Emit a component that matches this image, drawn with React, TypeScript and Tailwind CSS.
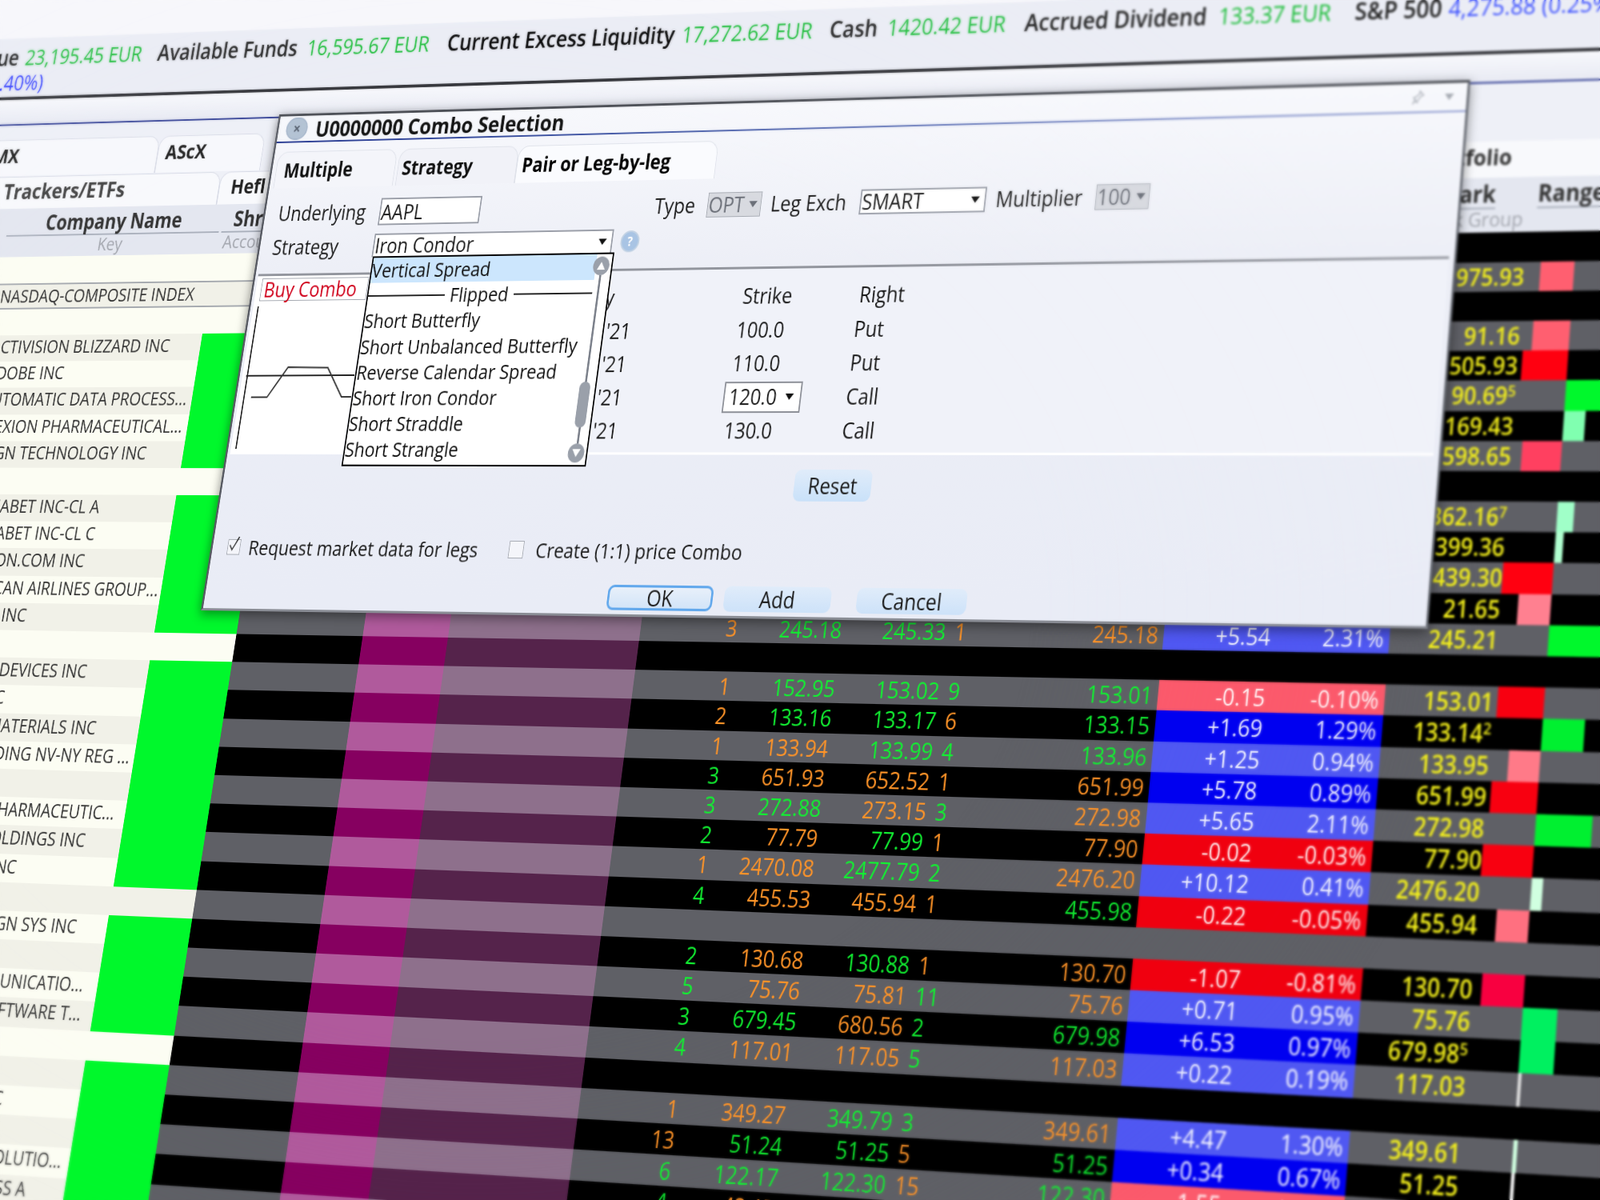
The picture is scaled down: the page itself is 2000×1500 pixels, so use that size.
const G = 'text-[#12f032]';
const O = 'text-[#ff9428]';

interface Row {
  name?: string;
  green?: boolean;
  bidSize?: [string, string];
  bid?: [string, string];
  ask?: [string, string];
  askSize?: [string, string];
  last?: [string, string];
  change?: string;
  pct?: string;
  mark?: string;
  sup?: string;
  bar?: number;
  barColor?: string;
}

const rows: Row[] = [
  {},
  { name: 'NASDAQ-COMPOSITE INDEX', mark: '975.93', bar: -43, barColor: '#ff5f70' },
  {},
  { name: 'ACTIVISION BLIZZARD INC', green: true, mark: '91.16', bar: -47, barColor: '#ff5f70' },
  { name: 'ADOBE INC', green: true, mark: '505.93', bar: -58, barColor: '#ff0010' },
  { name: 'AUTOMATIC DATA PROCESS...', green: true, mark: '90.69', sup: '5', bar: 52, barColor: '#00f82c' },
  { name: 'ALEXION PHARMACEUTICAL...', green: true, mark: '169.43', bar: 27, barColor: '#80ffb0' },
  { name: 'ALIGN TECHNOLOGY INC', green: true, mark: '598.65', bar: -50, barColor: '#ff4060' },
  {},
  { name: 'ALPHABET INC-CL A', green: true, mark: '362.16', sup: '7', bar: 21, barColor: '#a0ffc8' },
  { name: 'ALPHABET INC-CL C', green: true, mark: '399.36', bar: 10, barColor: '#b0ffd0' },
  { name: 'AMAZON.COM INC', green: true, mark: '439.30', bar: -66, barColor: '#ff0010' },
  { name: 'AMERICAN AIRLINES GROUP...', green: true, mark: '21.65', bar: -41, barColor: '#ff8090' },
  { name: 'AMGEN INC', green: true, bidSize: ['3', O], bid: ['245.18', G], ask: ['245.33', G], askSize: ['1', O], last: ['245.18', O], change: '+5.54', pct: '2.31%', mark: '245.21', bar: 69, barColor: '#00f82c' },
  {},
  { name: 'ANALOG DEVICES INC', green: true, bidSize: ['1', O], bid: ['152.95', G], ask: ['153.02', G], askSize: ['9', G], last: ['153.01', G], change: '-0.15', pct: '-0.10%', mark: '153.01', bar: -58, barColor: '#f80010' },
  { name: 'ANSYS INC', green: true, bidSize: ['2', O], bid: ['133.16', G], ask: ['133.17', G], askSize: ['6', O], last: ['133.15', G], change: '+1.69', pct: '1.29%', mark: '133.14', sup: '2', bar: 52, barColor: '#00f030' },
  { name: 'APPLIED MATERIALS INC', green: true, bidSize: ['1', O], bid: ['133.94', O], ask: ['133.99', G], askSize: ['4', G], last: ['133.96', G], change: '+1.25', pct: '0.94%', mark: '133.95', bar: -39, barColor: '#ff7a88' },
  { name: 'ASML HOLDING NV-NY REG ...', green: true, bidSize: ['3', G], bid: ['651.93', O], ask: ['652.52', O], askSize: ['1', O], last: ['651.99', O], change: '+5.78', pct: '0.89%', mark: '651.99', bar: -58, barColor: '#f80010' },
  { name: 'BAIDU INC', green: true, bidSize: ['3', G], bid: ['272.88', G], ask: ['273.15', O], askSize: ['3', G], last: ['272.98', O], change: '+5.65', pct: '2.11%', mark: '272.98', bar: 69, barColor: '#00f030' },
  { name: 'BIOMARIN PHARMACEUTIC...', green: true, bidSize: ['2', G], bid: ['77.79', O], ask: ['77.99', G], askSize: ['1', O], last: ['77.90', O], change: '-0.02', pct: '-0.03%', mark: '77.90', bar: -69, barColor: '#f80010' },
  { name: 'BOOKING HOLDINGS INC', green: true, bidSize: ['1', O], bid: ['2470.08', O], ask: ['2477.79', G], askSize: ['2', G], last: ['2476.20', O], change: '+10.12', pct: '0.41%', mark: '2476.20', bar: 14, barColor: '#d0ffe0' },
  { name: 'BROADCOM INC', green: true, bidSize: ['4', G], bid: ['455.53', O], ask: ['455.94', O], askSize: ['1', O], last: ['455.98', G], change: '-0.22', pct: '-0.05%', mark: '455.94', bar: -40, barColor: '#ff7080' },
  {},
  { name: 'CADENCE DESIGN SYS INC', green: true, bidSize: ['2', G], bid: ['130.68', O], ask: ['130.88', G], askSize: ['1', O], last: ['130.70', O], change: '-1.07', pct: '-0.81%', mark: '130.70', bar: -52, barColor: '#f80040' },
  { name: 'CDW CORP', green: true, bidSize: ['5', G], bid: ['75.76', O], ask: ['75.81', O], askSize: ['11', G], last: ['75.76', O], change: '+0.71', pct: '0.95%', mark: '75.76', bar: 42, barColor: '#00f060' },
  { name: 'CHARTER COMMUNICATIO...', green: true, bidSize: ['3', G], bid: ['679.45', G], ask: ['680.56', O], askSize: ['2', G], last: ['679.98', G], change: '+6.53', pct: '0.97%', mark: '679.98', sup: '5', bar: 42, barColor: '#00f060' },
  { name: 'CHECK POINT SOFTWARE T...', green: true, bidSize: ['4', G], bid: ['117.01', O], ask: ['117.05', O], askSize: ['5', G], last: ['117.03', O], change: '+0.22', pct: '0.19%', mark: '117.03', bar: 4, barColor: '#e0e0e0' },
  {},
  { name: 'CINTAS CORP', green: true, bidSize: ['1', O], bid: ['349.27', O], ask: ['349.79', G], askSize: ['3', G], last: ['349.61', O], change: '+4.47', pct: '1.30%', mark: '349.61', bar: 5, barColor: '#d0ffe0' },
  { name: 'CISCO SYSTEMS INC', green: true, bidSize: ['13', O], bid: ['51.24', G], ask: ['51.25', G], askSize: ['5', O], last: ['51.25', G], change: '+0.34', pct: '0.67%', mark: '51.25', bar: 4, barColor: '#ffffff' },
  { name: 'CITRIX SYSTEMS INC', green: true, bidSize: ['6', G], bid: ['122.17', G], ask: ['122.30', G], askSize: ['15', O], last: ['122.30', G], change: '-1.55', pct: '-1.25%', mark: '122.30' },
  { name: 'COGNIZANT TECH SOLUTIO...', green: true, bidSize: ['4', G], bid: ['42.17', O], ask: ['42.18', G], askSize: ['2', O], last: ['42.18', G], change: '+0.22', pct: '0.52%', mark: '42.18' },
  { name: 'COMCAST CORP-CLASS A', green: true },
];

const Caret = ({ color = '#111' }: { color?: string }) => (
  <svg width="14" height="10" viewBox="0 0 14 10">
    <polygon points="1,1 13,1 7,9" fill={color} />
  </svg>
);

const GridRow = ({ row, index }: { row: Row; index: number }) => {
  const gray = index % 2 === 1;
  const up = row.change?.startsWith('+');
  return (
    <div
      className={`grid h-[35.2px] grid-cols-[485px_128px_193px_128px_280px_138px_147px_144px_92px_194px_7px_140px_153px_137px_63px_171px] text-[28px] font-medium leading-[35px] ${
        gray ? 'bg-[#5f6066]' : 'bg-black'
      }`}
    >
      <div
        className={`overflow-hidden whitespace-nowrap pl-[146px] text-[24px] leading-[29px] text-[#333] ${
          gray ? 'bg-[#f1f1e8]' : 'bg-[#fcfdf3]'
        } ${index === 1 ? 'border-y-2 border-[#a4a8ae]' : ''}`}
      >
        {row.name}
      </div>
      <div
        className={
          row.green
            ? 'bg-[#00f82c]'
            : `${gray ? 'bg-[#f1f1e8]' : 'bg-[#fcfdf3]'} ${index === 1 ? 'border-y-2 border-[#a4a8ae]' : ''}`
        }
      />
      <div />
      <div className={gray ? 'bg-[#b05a9c]' : 'bg-[#860060]'} />
      <div className={gray ? 'bg-[#8e708c]' : 'bg-[#55234b]'} />
      <div className={`text-right ${row.bidSize?.[1]}`}>{row.bidSize?.[0]}</div>
      <div className={`text-right ${row.bid?.[1]}`}>{row.bid?.[0]}</div>
      <div className={`text-right ${row.ask?.[1]}`}>{row.ask?.[0]}</div>
      <div className={`pl-[12px] ${row.askSize?.[1]}`}>{row.askSize?.[0]}</div>
      <div className={`text-right ${row.last?.[1]}`}>{row.last?.[0]}</div>
      <div />
      <div
        className={`text-right text-white ${
          row.change ? (up ? (gray ? 'bg-[#5058f2]' : 'bg-[#0000f0]') : gray ? 'bg-[#fb5a6c]' : 'bg-[#f00010]') : ''
        }`}
      >
        {row.change}
      </div>
      <div
        className={`pr-[7px] text-right text-white ${
          row.change ? (up ? (gray ? 'bg-[#5058f2]' : 'bg-[#0000f0]') : gray ? 'bg-[#fb5a6c]' : 'bg-[#f00010]') : ''
        }`}
      >
        {row.pct}
      </div>
      <div className="text-right font-semibold text-[#f4f01c]">
        {row.mark}
        {row.sup && <sup className="text-[18px] leading-none">{row.sup}</sup>}
      </div>
      <div className="flex justify-end">
        {row.bar !== undefined && row.bar < 0 && <div style={{ width: -row.bar, background: row.barColor }} />}
      </div>
      <div className="flex">
        {row.bar !== undefined && row.bar > 0 && <div style={{ width: row.bar, background: row.barColor }} />}
      </div>
    </div>
  );
};

const TopBar = () => (
  <div className="flex h-[185px] flex-col bg-[#f7f7fb]">
    <div className="h-[103px]" />
    <div className="h-[82px] bg-[#ebedf5] text-[29px] leading-[36px]">
      <div className="flex h-[46px] items-center whitespace-nowrap pt-[7px] font-medium text-[#16bc34]">
        <div className="flex w-[118px] shrink-0 justify-end pr-[11px] text-[30px] font-semibold text-[#222]">Net Liquidation Value</div>
        <div className="w-[220px] shrink-0">23,195.45 EUR</div>
        <div className="w-[242px] shrink-0 text-[30px] font-semibold text-[#222]">Available Funds</div>
        <div className="w-[222px] shrink-0">16,595.67 EUR</div>
        <div className="w-[359px] shrink-0 text-[30px] font-semibold text-black">Current Excess Liquidity</div>
        <div className="w-[219px] shrink-0">17,272.62 EUR</div>
        <div className="w-[84px] shrink-0 text-[30px] font-semibold text-[#222]">Cash</div>
        <div className="w-[197px] shrink-0">1420.42 EUR</div>
        <div className="w-[270px] shrink-0 text-[30px] font-semibold text-[#222]">Accrued Dividend</div>
        <div className="w-[185px] shrink-0">133.37 EUR</div>
        <div className="w-[125px] shrink-0 text-[30px] font-semibold text-[#222]">S&amp;P 500</div>
        <div className="shrink-0 text-[#3c50ff]">4,275.88 (0.25%)</div>
      </div>
      <div className="-mt-[2px] flex h-[36px] w-[155px] justify-end whitespace-nowrap font-medium text-[#2f3cff]">-91.43 (-0.40%)</div>
    </div>
  </div>
);

const WindowTabs = () => (
  <div>
    <div className="h-[38px] border-t-[4px] border-[#2e2f34] bg-gradient-to-b from-[#f7f8fc] to-[#e8eaf3]" />
    <div className="h-[2px] bg-[#27358f]" />
    <div className="flex h-[70px] items-end bg-[#eef0f7] text-[27px] font-bold leading-[41px] text-[#222]">
      <div className="h-[50px] w-[365px] rounded-tr-[16px] border-t border-r border-[#d8dbe6] bg-[#f7f8fc] pl-[74px]">AMX</div>
      <div className="h-[50px] w-[170px] rounded-t-[16px] border-t border-x border-[#d8dbe6] bg-[#f7f8fc] pl-[12px]">AScX</div>
      <div className="h-[50px] w-[1298px]" />
      <div className="h-[50px] w-[200px] rounded-t-[16px] border-t border-x border-[#d8dbe6] bg-[#f7f8fc] pl-[14px]">Dow</div>
    </div>
    <div className="flex h-[45px] items-end bg-[#eef0f7] font-bold leading-[38px] text-[#444]">
      <div className="h-[44px] w-[474px] rounded-tr-[16px] border-t border-r border-[#d8dbe6] bg-[#f8f9fc] pl-[121px] text-[29px]">Trackers/ETFs</div>
      <div className="h-[44px] w-[150px] rounded-t-[16px] border-t border-x border-[#d8dbe6] bg-[#f8f9fc] pl-[18px] text-[27px] text-[#222]">Hefl</div>
      <div className="h-[44px] w-[1597px]" />
      <div className="h-[44px] w-[379px] bg-[#f8f9fc] text-[27px] text-[#333]">Portfolio</div>
    </div>
    <div className="flex h-[66.4px] bg-[#e4e7f0] pt-[2px] text-center text-[28px] font-bold leading-[34px] text-[#333]">
      <div className="w-[138px] shrink-0" />
      <div className="w-[347px] shrink-0">
        <div className="border-b-2 border-[#aab0bc]">Company Name</div>
        <div className="-mt-[5px] text-[24px] font-normal text-[#a3a6ae]">Key</div>
      </div>
      <div className="w-[4px] shrink-0" />
      <div className="w-[250px] shrink-0 text-left">
        <div className="border-b-2 border-[#aab0bc] pl-[17px]">Shrs</div>
        <div className="-mt-[5px] pl-[5px] text-[24px] font-normal text-[#a3a6ae]">Account</div>
      </div>
      <div className="w-[1509px] shrink-0" />
      <div className="w-[74px] shrink-0">
        <div className="border-b-2 border-[#aab0bc]">Mark</div>
        <div className="-mt-[5px] flex w-[111px] justify-end whitespace-nowrap text-[24px] font-normal text-[#a3a6ae]">Risk Group</div>
      </div>
      <div className="w-[46px] shrink-0" />
      <div className="w-[210px] shrink-0 pl-[8px] text-left">
        <div className="border-b-2 border-[#aab0bc]">Range</div>
      </div>
    </div>
  </div>
);

const strategies = ['Short Butterfly', 'Short Unbalanced Butterfly', 'Reverse Calendar Spread', 'Short Iron Condor', 'Short Straddle', 'Short Strangle'];

const StrategyList = () => (
  <div className="absolute left-[180px] top-[190px] h-[272px] w-[368px] border-2 border-black bg-white text-[26px] leading-[33.2px] text-[#111]">
    <div className="h-[33.2px] w-[341px] bg-[#cce6fd] whitespace-nowrap">Vertical Spread</div>
    <div className="flex h-[33.2px] w-[341px] items-center gap-[8px]">
      <div className="h-[2px] flex-1 bg-[#222]" />
      Flipped
      <div className="h-[2px] flex-1 bg-[#222]" />
    </div>
    {strategies.map((s) => (
      <div key={s} className="h-[33.2px] whitespace-nowrap">{s}</div>
    ))}
    <div className="absolute right-[3px] top-[3px] bottom-[3px] flex w-[24px] flex-col items-center">
      <div className="flex h-[24px] w-[24px] shrink-0 items-center justify-center rounded-full bg-[#9aa0aa]">
        <svg width="14" height="12" viewBox="0 0 14 12"><polygon points="7,1 13,11 1,11" fill="#fff" /></svg>
      </div>
      <div className="flex w-[3px] flex-1 flex-col items-center bg-[#7d828c]">
        <div className="mt-[136px] h-[58px] w-[16px] shrink-0 rounded-full bg-[#9aa0aa]" />
      </div>
      <div className="flex h-[24px] w-[24px] shrink-0 items-center justify-center rounded-full bg-[#9aa0aa]">
        <svg width="14" height="12" viewBox="0 0 14 12"><polygon points="1,1 13,1 7,11" fill="#fff" /></svg>
      </div>
    </div>
  </div>
);

const legs = [
  { strike: '100.0', right: 'Put' },
  { strike: '110.0', right: 'Put' },
  { strike: '120.0', right: 'Call', select: true },
  { strike: '130.0', right: 'Call' },
];

const ComboDialog = () => (
  <div className="absolute left-[552px] top-[220px] box-border h-[650px] w-[1725px] border-t-[3px] border-x-[3px] border-b-[3px] border-t-[#44474e] border-l-[#585b63] border-r-[#666a72] border-b-[#8a8d95] bg-gradient-to-b from-[#f7f8fc] via-[#eceef6] via-35% to-[#e9ecf6] text-[27px] leading-[34px] text-[#1a1a1a] shadow-[0_4px_14px_rgba(0,0,0,0.45)]">
    <div className="flex h-[34px] items-center">
      <div className="ml-[12px] flex h-[30px] w-[34px] items-center justify-center rounded-full border-2 border-[#a8b8cc] bg-[#b4c3d4] text-[20px] font-bold leading-none text-[#5a6472]">×</div>
      <div className="ml-[13px] pt-[2px] text-[29px] font-bold text-[#111]">U0000000 Combo Selection</div>
      <div className="ml-auto flex items-center gap-[26px] pr-[16px]">
        <svg width="16" height="18" viewBox="0 0 16 18"><path d="M10 1l5 5-3 1-4 5-1 3-3-3-3 5 4-5-3-3 3-1 5-4z" fill="none" stroke="#b0b4bc" strokeWidth="1.5" /></svg>
        <Caret color="#a8acb4" />
      </div>
    </div>
    <div className="h-[2px] bg-gradient-to-r from-[#1c2f8c] to-[#8f9bd0]" />
    <div className="ml-[6px] mt-[12px] flex h-[49px] items-end text-[26px] font-bold leading-[48px] text-[#111]">
      <div className="h-[49px] w-[188px] rounded-t-[16px] border-t border-x border-[#dfe2ea] bg-[#f4f5fa] pl-[12px]">Multiple</div>
      <div className="ml-[4px] h-[49px] w-[184px] rounded-t-[16px] border-t border-x border-[#dfe2ea] bg-[#f1f2f8] pl-[6px]">Strategy</div>
      <div className="h-[49px] w-[300px] rounded-t-[16px] border-t border-x border-[#dfe2ea] bg-[#fafbfe] pl-[7px] text-black">Pair or Leg-by-leg</div>
    </div>
    <div className="mt-[16px] flex h-[36px] items-center whitespace-nowrap">
      <div className="w-[180px] shrink-0 pl-[21px]">Underlying</div>
      <div className="h-[36px] w-[156px] shrink-0 border-2 border-[#9a9ea8] bg-white pl-[1px]">AAPL</div>
      <div className="w-[263px] shrink-0" />
      <div className="w-[78px] shrink-0">Type</div>
      <div className="flex h-[32px] w-[79px] shrink-0 items-center justify-between border border-[#a8acb4] bg-[#d8dae0] pl-[1px] pr-[4px] text-[#6b6f78]">OPT<Caret color="#6b6f78" /></div>
      <div className="w-[14px] shrink-0" />
      <div className="w-[129px] shrink-0">Leg Exch</div>
      <div className="flex h-[32px] w-[179px] shrink-0 items-center justify-between border-2 border-[#9a9ea8] bg-white pl-[1px] pr-[6px]">SMART<Caret /></div>
      <div className="w-[14px] shrink-0" />
      <div className="w-[139px] shrink-0">Multiplier</div>
      <div className="flex h-[32px] w-[74px] shrink-0 items-center justify-between border border-[#a8acb4] bg-[#d8dae0] pl-[1px] pr-[4px] text-[#6b6f78]">100<Caret color="#6b6f78" /></div>
    </div>
    <div className="mt-[11px] flex h-[31px] items-center">
      <div className="w-[178px] shrink-0 pl-[20px]">Strategy</div>
      <div className="flex h-[31px] w-[365px] shrink-0 items-center justify-between border-t-2 border-x-2 border-[#9a9ea8] bg-white pb-[2px] pl-[1px] pr-[6px]">Iron Condor<Caret /></div>
      <div className="ml-[12px] flex h-[28px] w-[28px] items-center justify-center rounded-full border-2 border-[#c2d2e4] bg-[#a9c4e4] text-[16px] font-bold leading-none text-white">?</div>
    </div>
    <div className="ml-[4px] mt-[20px] flex h-[236px] w-[1708px] border-t-[3px] border-[#92959d] border-b-[3px] border-b-white bg-[#f0f2f9]">
      <div className="relative h-[230px] w-[175px] shrink-0 bg-white">
        <div className="ml-[8px] mt-[3px] h-[30px] border border-[#a4a8b0] pl-[4px] text-[27px] leading-[28px] text-[#d0021b]">Buy Combo</div>
        <svg className="absolute left-0 top-0" width="175" height="230" viewBox="0 0 175 230">
          <line x1="8" y1="40" x2="8" y2="226" stroke="#222" strokeWidth="2" />
          <line x1="6" y1="131" x2="175" y2="131" stroke="#222" strokeWidth="2" />
          <polyline points="19,159 44,159 70,120 132,121 160,159 175,159" fill="none" stroke="#333" strokeWidth="2" />
        </svg>
      </div>
      <div className="mt-[12px] grid h-[212px] w-[1000px] grid-cols-[409px_155px_169px_200px] grid-rows-[44px_42px_42px_42px_42px] items-center whitespace-nowrap">
        <div className="pr-[31px] text-right">Expiry</div>
        <div />
        <div className="pl-[3px]">Strike</div>
        <div className="pl-[2px]">Right</div>
        {legs.map((leg) => (
          <div key={leg.strike} className="contents">
            <div className="text-right">DEC17 &apos;21</div>
            <div />
            {leg.select ? (
              <div className="flex h-[39px] w-[112px] -translate-x-[7px] items-center justify-between border-2 border-[#8e9199] bg-white pl-[6px] pr-[8px]">{leg.strike}<Caret /></div>
            ) : (
              <div>{leg.strike}</div>
            )}
            <div>{leg.right}</div>
          </div>
        ))}
      </div>
    </div>
    <div className="ml-[853px] mt-[18px] flex h-[39px] w-[109px] items-center justify-center rounded-[9px] bg-gradient-to-b from-[#e0ecfa] to-[#c9e1f9]">Reset</div>
    <div className="mt-[44px] flex h-[36px] items-center whitespace-nowrap text-[26px]">
      <div className="ml-[23px] flex h-[20px] w-[20px] items-center justify-center border border-[#a9adb5] bg-[#f4f5fa]">
        <svg width="22" height="26" viewBox="0 0 22 26" className="-mt-[8px]"><polyline points="3,15 8,22 19,2" fill="none" stroke="#333" strokeWidth="2" /></svg>
      </div>
      <div className="ml-[13px] w-[395px]">Request market data for legs</div>
      <div className="h-[22px] w-[22px] border border-[#a9adb5] bg-[#f4f5fa]" />
      <div className="ml-[18px]">Create (1:1) price Combo</div>
    </div>
    <div className="ml-[605px] mt-[24px] flex h-[31px] items-center">
      <div className="flex h-[31px] w-[152px] items-center justify-center rounded-[9px] border-[3px] border-[#62a8ec] bg-gradient-to-b from-[#e8f0fa] to-[#d2e4f8]">OK</div>
      <div className="ml-[16px] flex h-[31px] w-[151px] items-center justify-center rounded-[9px] bg-gradient-to-b from-[#e0ecfa] to-[#cde2f9]">Add</div>
      <div className="ml-[36px] flex h-[31px] w-[152px] items-center justify-center rounded-[9px] bg-gradient-to-b from-[#e0ecfa] to-[#cde2f9]">Cancel</div>
    </div>
    <StrategyList />
  </div>
);

export default function App() {
  return (
    <div className="relative h-[1500px] w-[2000px] overflow-hidden bg-[#f7f7fb] font-['Open_Sans',sans-serif]">
      <div className="relative h-[1750px] w-[2600px] origin-top-left [transform:matrix3d(0.76184,-0.030441,0,-0.00005514,-0.16337,0.91555,0,-0.000050186,0,0,1,0,-35.6,-41.62,0,1.041478)]">
        <TopBar />
        <WindowTabs />
        {rows.map((row, i) => (
          <GridRow key={i} row={row} index={i} />
        ))}
        <ComboDialog />
      </div>
      <div className="pointer-events-none absolute inset-0 backdrop-blur-[1.5px] [mask-image:radial-gradient(ellipse_1250px_1000px_at_600px_750px,transparent_55%,black_100%)]" />
    </div>
  );
}
